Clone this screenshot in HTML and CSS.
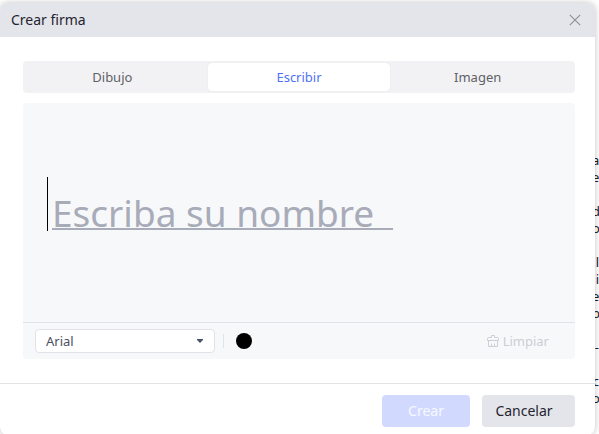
FILE: index.html
```html
<!DOCTYPE html>
<html lang="es">
<head>
<meta charset="utf-8">
<meta name="viewport" content="width=device-width, initial-scale=1">
<title>Crear firma</title>
<link rel="stylesheet" href="styles.css">
</head>
<body>
<div class="document">
  <p>a<br>e</p>
  <p>d<br>o</p>
  <p>l<br>i<br>e<br>b</p>
  <p>-</p>
  <p>c<br>o</p>
</div>
<main class="dialog" role="dialog" aria-labelledby="title">
  <header class="header">
    <h1 id="title">Crear firma</h1>
    <button class="close" type="button" aria-label="Cerrar">
      <svg width="12" height="12" viewBox="0 0 12 12"><path d="M.8.8l10.4 10.4M11.2.8L.8 11.2" fill="none" stroke="currentColor" stroke-width="1.1"/></svg>
    </button>
  </header>
  <div class="body">
    <div class="tabs" role="tablist">
      <button class="tab" type="button" role="tab">Dibujo</button>
      <button class="tab active" type="button" role="tab" aria-selected="true">Escribir</button>
      <button class="tab" type="button" role="tab">Imagen</button>
    </div>
    <section class="panel">
      <div class="canvas">
        <span class="caret"></span>
        <input class="name" type="text" placeholder="Escriba su nombre" aria-label="Escriba su nombre">
      </div>
      <div class="toolbar">
        <select class="font" aria-label="Fuente"><option>Arial</option></select>
        <span class="divider"></span>
        <button class="color" type="button" aria-label="Color"></button>
        <button class="clear" type="button" disabled>
          <svg width="12" height="12" viewBox="0 0 12 12" fill="none" stroke="currentColor"><path d="M4.500 2.500v-2h3v2h3a1 1 0 0 1 1 1v2H.5v-2a1 1 0 0 1 1-1zM1.500 5.500v6h9v-6M4.500 11.500v-3M7.500 11.500v-3"/></svg>
          Limpiar
        </button>
      </div>
    </section>
  </div>
  <footer class="footer">
    <button class="button primary" type="button" disabled>Crear</button>
    <button class="button cancel" type="button">Cancelar</button>
  </footer>
</main>
</body>
</html>
```
FILE: styles.css
```css
* {
  box-sizing: border-box;
}

body {
  margin: 0;
  padding: 3px 4px 0 0;
  position: relative;
  overflow: hidden;
  background: #fff;
  font: 14px/20px "Noto Sans", "Open Sans", sans-serif;
  color: #1f2430;
}

button,
input,
select {
  font: inherit;
  color: inherit;
  margin: 0;
  padding: 0;
  border: 0;
  background: none;
}

.document {
  position: absolute;
  top: 152px;
  right: 0;
  width: 7px;
  font-size: 13px;
  line-height: 17px;
  text-align: right;
  color: #222;
}

.document p {
  margin: 0 0 17px;
}

.dialog {
  position: relative;
  background: #fff;
  border-radius: 8px;
  box-shadow: 0 0 6px rgba(0, 0, 0, 0.25);
}

.header {
  display: flex;
  align-items: center;
  justify-content: space-between;
  height: 34px;
  padding: 0 14px 0 11px;
  background: #e4e5ea;
  border-radius: 8px 8px 0 0;
}

.header h1 {
  margin: 0;
  font-size: 14px;
  font-weight: 400;
}

.close {
  display: flex;
  color: #8b8f98;
}

.body {
  padding: 24px 20px 24px 23px;
}

.tabs {
  display: grid;
  grid-template-columns: repeat(3, 1fr);
  padding: 2px;
  background: #f2f2f4;
  border-radius: 4px;
}

.tab {
  height: 28px;
  padding-right: 8px;
  font-size: 13px;
  color: #5f6166;
  border-radius: 4px;
}

.tab.active {
  padding: 0;
  background: #fff;
  color: #4e73f8;
  box-shadow: 0 0 1px #d5d6e0;
}

.panel {
  margin-top: 10px;
  background: #f7f8fa;
  border-radius: 4px;
}

.canvas {
  display: flex;
  align-items: flex-start;
  gap: 4px;
  height: 219px;
  padding: 74px 24px 0;
}

.caret {
  width: 1px;
  height: 54px;
  background: #000;
}

.name {
  width: 341px;
  height: 53px;
  padding-top: 20px;
  font-size: 37px;
  line-height: 38px;
  border-bottom: 2px solid #a8abb8;
}

.name::placeholder {
  color: #a8abb8;
  opacity: 1;
}

.toolbar {
  display: flex;
  align-items: center;
  height: 37px;
  padding: 0 26px 0 12px;
  border-top: 1px solid #e2e3e9;
}

.font {
  width: 180px;
  height: 24px;
  padding-left: 10px;
  font-size: 13px;
  color: #4a5060;
  appearance: none;
  border: 1px solid #e2e3e9;
  border-radius: 4px;
  background: #fff url("data:image/svg+xml,%3Csvg xmlns='http://www.w3.org/2000/svg' width='6' height='4'%3E%3Cpath d='M0 0h6v1L3 4 0 1z' fill='%23485468'/%3E%3C/svg%3E") no-repeat right 11px center;
}

.divider {
  width: 1px;
  height: 14px;
  margin: 0 12px 0 8px;
  background: #e2e3e9;
}

.color {
  width: 16px;
  height: 16px;
  border-radius: 50%;
  background: #000;
}

.clear {
  display: flex;
  align-items: center;
  gap: 4px;
  margin-left: auto;
  font-size: 13px;
  color: #cbced4;
}

.footer {
  display: flex;
  justify-content: flex-end;
  gap: 12px;
  padding: 11px 20px 8px;
  border-top: 1px solid #e2e3e6;
}

.button {
  width: 88px;
  height: 32px;
  border-radius: 4px;
}

.primary {
  background: #d1d9ff;
  color: #f8f9ff;
}

.cancel {
  width: 93px;
  padding-right: 9px;
  background: #e4e5ea;
}
```
